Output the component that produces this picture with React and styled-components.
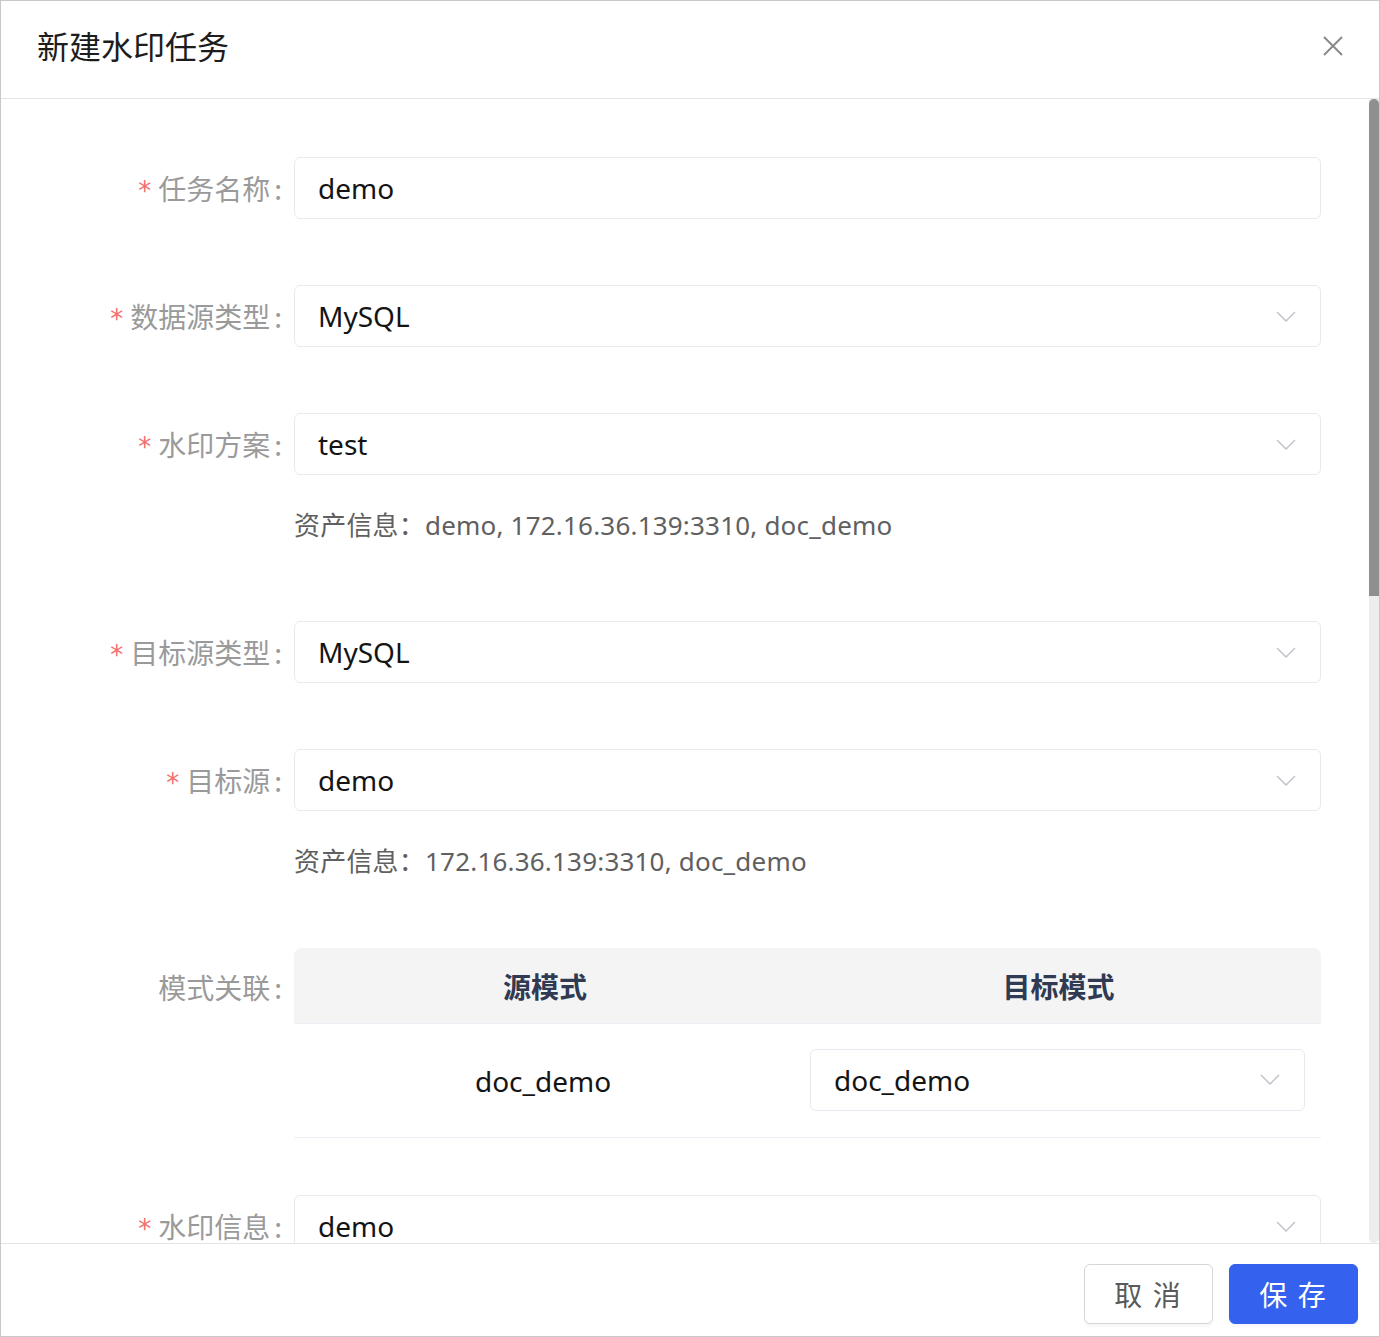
import React from "react";
import styled, { createGlobalStyle } from "styled-components";

const GlobalStyle = createGlobalStyle`
  html, body {
    margin: 0;
    padding: 0;
    background: #fff;
  }
  body {
    font-family: "Noto Sans", "Noto Sans CJK SC", sans-serif;
  }
`;

const Dialog = styled.div`
  width: 1380px;
  height: 1337px;
  box-sizing: border-box;
  border: 1px solid #c8c8c8;
  display: flex;
  flex-direction: column;
  background: #fff;
  overflow: hidden;
`;

const Header = styled.div`
  height: 98px;
  flex-shrink: 0;
  box-sizing: border-box;
  border-bottom: 1px solid #e4e4e4;
  display: flex;
  align-items: center;
  justify-content: space-between;
  padding: 0 36px 10px 36px;
`;

const Title = styled.div`
  font-size: 32px;
  color: #1d1d1d;
  font-family: "Noto Sans CJK SC", sans-serif;
`;

const CloseBtn = styled.button`
  border: none;
  background: none;
  padding: 0;
  width: 20px;
  height: 20px;
  display: flex;
  cursor: pointer;
  margin-top: 2px;
`;

const Body = styled.div`
  flex: 1;
  display: flex;
  min-height: 0;
`;

const Content = styled.div`
  flex: 1;
  overflow: hidden;
  padding: 58px 48px 0 0;
`;

const ScrollTrack = styled.div`
  width: 10px;
  flex-shrink: 0;
  background: #ededed;
  border-radius: 0 0 5px 5px;
`;

const ScrollThumb = styled.div`
  height: 497px;
  background: #8f8f8f;
  border-radius: 5px 5px 0 0;
`;

const FormItem = styled.div`
  display: flex;
  align-items: flex-start;
  margin-bottom: ${(p) => p.$mb ?? 66}px;
`;

const Label = styled.label`
  width: 293px;
  height: ${(p) => p.$lh ?? 62}px;
  flex-shrink: 0;
  box-sizing: border-box;
  padding-right: 13px;
  display: flex;
  align-items: center;
  justify-content: flex-end;
  font-size: 28px;
  color: #9a9a9a;
  font-family: "Noto Sans CJK SC", sans-serif;
  white-space: nowrap;
`;

const Star = styled.span`
  color: #f56c6c;
  font-size: 26px;
  font-family: "DejaVu Sans", sans-serif;
  margin-right: 7px;
  position: relative;
  top: 3px;
`;

const Colon = styled.span`
  padding-left: 4px;
  margin-right: -1px;
`;

const Control = styled.div`
  flex: 1;
  min-width: 0;
`;

const Field = styled.div`
  height: 62px;
  box-sizing: border-box;
  border: 1px solid #e6e9f0;
  border-radius: 6px;
  display: flex;
  align-items: center;
  justify-content: space-between;
  padding: 0 24px 0 23px;
  font-size: 28px;
  color: #141414;
  background: #fff;
`;

const Info = styled.div`
  margin-top: 30px;
  margin-bottom: ${(p) => p.$mb ?? 10}px;
  font-size: 26px;
  line-height: 40px;
  color: #606060;
  letter-spacing: 0.2px;
`;

const Table = styled.div`
  width: 100%;
`;

const TableHead = styled.div`
  display: grid;
  grid-template-columns: 502px 1fr;
  height: 76px;
  box-sizing: border-box;
  background: #f4f4f5;
  border-radius: 8px 8px 0 0;
  border-bottom: 1px solid #ebeef5;
`;

const HeadCell = styled.div`
  display: flex;
  align-items: center;
  justify-content: center;
  font-size: 28px;
  font-weight: 700;
  color: #303a52;
  font-family: "Noto Sans CJK SC", sans-serif;
`;

const TableRow = styled.div`
  display: grid;
  grid-template-columns: 502px 1fr;
  height: 114px;
  box-sizing: border-box;
  border-bottom: 1px solid #ebeef5;
`;

const Cell = styled.div`
  display: flex;
  align-items: center;
  justify-content: center;
  padding: ${(p) => (p.$center ? "0 4px 0 0" : "0 16px 2px 14px")};
  font-size: 28px;
  color: #141414;

  & > div {
    flex: 1;
  }
`;

const Footer = styled.div`
  height: 93px;
  flex-shrink: 0;
  box-sizing: border-box;
  border-top: 1px solid #e4e4e4;
  display: flex;
  justify-content: flex-end;
  align-items: flex-start;
  gap: 16px;
  padding: 20px 21px 0 0;
`;

const Button = styled.button`
  width: 129px;
  height: 60px;
  box-sizing: border-box;
  border-radius: 6px;
  font-size: 28px;
  font-family: "Noto Sans CJK SC", sans-serif;
  letter-spacing: 2px;
  cursor: pointer;
  box-shadow: 0 3px 2px rgba(0, 0, 0, 0.03);
  border: 1px solid ${(p) => (p.$primary ? "#3461ee" : "#d6d6d6")};
  background: ${(p) => (p.$primary ? "#3461ee" : "#fff")};
  color: ${(p) => (p.$primary ? "#fff" : "#5a5a5a")};
`;

const Chevron = () => (
  <svg width="20" height="11" viewBox="0 0 20 11">
    <polyline
      points="1,1 10,10 19,1"
      fill="none"
      stroke="#c0c4cc"
      strokeWidth="1.5"
    />
  </svg>
);

const CloseIcon = () => (
  <svg width="20" height="20" viewBox="0 0 20 20">
    <path d="M1 1 L19 19 M19 1 L1 19" stroke="#8a8a8a" strokeWidth="2" />
  </svg>
);

const Select = ({ value }) => (
  <Field>
    <span>{value}</span>
    <Chevron />
  </Field>
);

const FieldLabel = ({ required, text, lh }) => (
  <Label $lh={lh}>
    {required && <Star>*</Star>}
    {text}
    <Colon>:</Colon>
  </Label>
);

const App = () => {
  return (
    <>
      <GlobalStyle />
      <Dialog>
        <Header>
          <Title>新建水印任务</Title>
          <CloseBtn>
            <CloseIcon />
          </CloseBtn>
        </Header>

        <Body>
          <Content>
            <FormItem>
              <FieldLabel required text="任务名称" />
              <Control>
                <Field>demo</Field>
              </Control>
            </FormItem>

            <FormItem>
              <FieldLabel required text="数据源类型" />
              <Control>
                <Select value="MySQL" />
              </Control>
            </FormItem>

            <FormItem>
              <FieldLabel required text="水印方案" />
              <Control>
                <Select value="test" />
                <Info>资产信息：demo, 172.16.36.139:3310, doc_demo</Info>
              </Control>
            </FormItem>

            <FormItem>
              <FieldLabel required text="目标源类型" />
              <Control>
                <Select value="MySQL" />
              </Control>
            </FormItem>

            <FormItem $mb={57}>
              <FieldLabel required text="目标源" />
              <Control>
                <Select value="demo" />
                <Info>资产信息：172.16.36.139:3310, doc_demo</Info>
              </Control>
            </FormItem>

            <FormItem $mb={57}>
              <FieldLabel text="模式关联" lh={78} />
              <Control>
                <Table>
                  <TableHead>
                    <HeadCell>源模式</HeadCell>
                    <HeadCell>目标模式</HeadCell>
                  </TableHead>
                  <TableRow>
                    <Cell $center>doc_demo</Cell>
                    <Cell>
                      <Select value="doc_demo" />
                    </Cell>
                  </TableRow>
                </Table>
              </Control>
            </FormItem>

            <FormItem>
              <FieldLabel required text="水印信息" />
              <Control>
                <Select value="demo" />
              </Control>
            </FormItem>
          </Content>
          <ScrollTrack>
            <ScrollThumb />
          </ScrollTrack>
        </Body>

        <Footer>
          <Button>取 消</Button>
          <Button $primary>保 存</Button>
        </Footer>
      </Dialog>
    </>
  );
};

export default App;
